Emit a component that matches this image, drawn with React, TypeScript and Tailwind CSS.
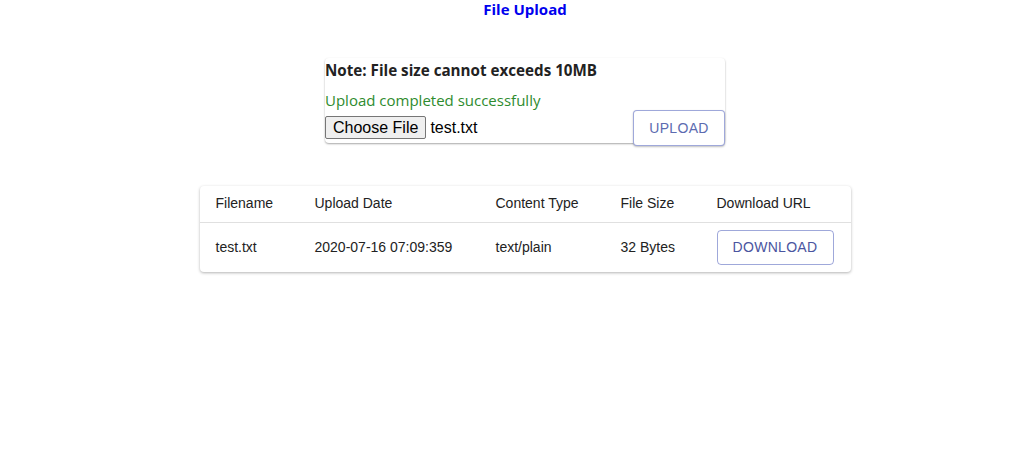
export default function App() {
  const rows = [
    {
      name: "test.txt",
      date: "2020-07-16 07:09:359",
      type: "text/plain",
      size: "32 Bytes",
    },
  ];

  return (
    <div className="min-h-screen bg-white pl-[36px] font-['Liberation_Sans',Arial,sans-serif]">
      <h1 className="text-center text-[15px] font-bold text-[#0000ee] font-['Open_Sans',sans-serif] leading-[18px]">
        File Upload
      </h1>

      {/* upload card */}
      <div className="mx-auto mt-[40px] w-[400px] rounded shadow-[0_1px_2px_rgba(0,0,0,0.35)] bg-white">
        <div className="pt-[2px] text-[15.2px] font-bold text-[#222] font-['Open_Sans',sans-serif] leading-[20px]">
          Note: File size cannot exceeds 10MB
        </div>
        <div className="mt-[10px] text-[15px] text-[#2e8b2e] font-['Open_Sans',sans-serif] leading-[20px]">
          Upload completed successfully
        </div>
        <div className="flex items-start h-[33px]">
          <div className="mt-[6px] flex flex-1 items-center">
            <span className="rounded-[2px] border border-[#767676] bg-[#efefef] px-[7px] text-[16px] leading-[21px] text-black">
              Choose File
            </span>
            <span className="ml-[4px] text-[16px] leading-[21px] text-black">
              test.txt
            </span>
          </div>
          <button className="h-[36px] w-[92px] rounded bg-white border border-[#3f51b5]/50 text-[14px] uppercase tracking-[0.3px] text-[#5c6bb0] shadow-[0_1px_2px_rgba(0,0,0,0.25)]">
            Upload
          </button>
        </div>
      </div>

      {/* files table */}
      <div className="mx-auto mt-[43px] w-[651px] rounded shadow-[0_1px_3px_rgba(0,0,0,0.3)] bg-white">
        <table className="w-full table-fixed text-left text-[14px] text-[#222]">
          <thead>
            <tr className="h-[36px] border-b border-[#e0e0e0]">
              <th className="pl-[16px] font-normal w-[115px]">Filename</th>
              <th className="font-normal w-[181px]">Upload Date</th>
              <th className="font-normal w-[125px]">Content Type</th>
              <th className="font-normal w-[96px]">File Size</th>
              <th className="font-normal">Download URL</th>
            </tr>
          </thead>
          <tbody>
            {rows.map((r) => (
              <tr key={r.name} className="h-[50px]">
                <td className="pl-[16px]">{r.name}</td>
                <td>{r.date}</td>
                <td>{r.type}</td>
                <td>{r.size}</td>
                <td>
                  <button className="h-[35px] w-[117px] rounded border border-[#3f51b5]/50 text-[14px] uppercase tracking-[0.3px] text-[#4a55a0]">
                    Download
                  </button>
                </td>
              </tr>
            ))}
          </tbody>
        </table>
      </div>
    </div>
  );
}
